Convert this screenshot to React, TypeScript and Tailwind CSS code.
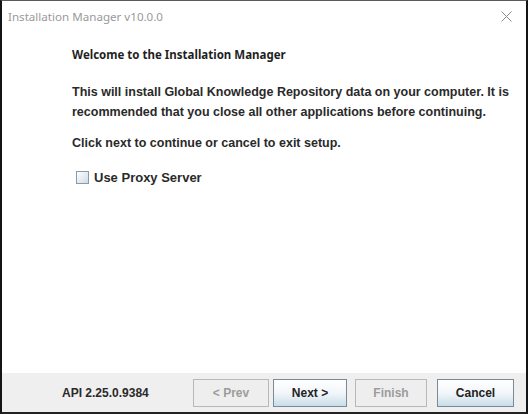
export default function App() {
  const disabledBtn =
    "h-[28px] border border-[#b8b8b8] bg-[#eeeeee] text-[#9c9c9c] text-[12px] font-bold flex items-center justify-center";
  const activeBtn =
    "h-[28px] border border-[#7a8a99] text-[#222] text-[12px] font-bold flex items-center justify-center bg-gradient-to-b from-[#ffffff] via-[#f2f6fa] to-[#c8dde8]";

  return (
    <div className="w-[528px] h-[414px] bg-white overflow-hidden">
      <div className="w-full h-full flex flex-col border-x-2 border-b-2 border-t border-x-[#141414] border-b-[#222] border-t-[#5a5a5a]">
        <div className="h-[31px] flex items-center justify-between pl-[6px] pr-[14px] shrink-0">
          <span className="text-[11.6px] text-[#9a9a9a]" style={{ fontFamily: "'Noto Sans', sans-serif" }}>
            Installation Manager v10.0.0
          </span>
          <svg width="11" height="11" viewBox="0 0 11 11" className="text-[#8a8a8a]">
            <path d="M0.5 0.5L10.5 10.5M10.5 0.5L0.5 10.5" stroke="currentColor" strokeWidth="1" fill="none" />
          </svg>
        </div>

        <div className="flex-1 pl-[70px] pr-[10px] pt-[15px]" style={{ fontFamily: "'Liberation Sans', Arial, sans-serif" }}>
          <h1
            className="text-[11.5px] font-bold text-[#1f1f1f] leading-[16px]"
            style={{ fontFamily: "'Noto Sans', Tahoma, sans-serif" }}
          >
            Welcome to the Installation Manager
          </h1>
          <p className="mt-[19px] text-[12.5px] font-bold text-[#2a2a2a] leading-[20px]">
            This will install Global Knowledge Repository data on your computer. It is
            <br />
            recommended that you close all other applications before continuing.
          </p>
          <p className="mt-[11px] text-[12.5px] font-bold text-[#2a2a2a] leading-[20px]">
            Click next to continue or cancel to exit setup.
          </p>
          <label className="mt-[15px] ml-[4px] flex items-center gap-[5px] text-[13px] font-bold text-[#2a2a2a]">
            <span className="w-[13px] h-[13px] border border-[#8a9aa8] bg-gradient-to-br from-[#ffffff] to-[#cfdbe6] shrink-0" />
            Use Proxy Server
          </label>
        </div>

        <div
          className="h-[39px] bg-[#efefef] flex items-center shrink-0"
          style={{ fontFamily: "'Liberation Sans', Arial, sans-serif" }}
        >
          <span className="ml-[60px] w-[131px] text-[12px] font-bold text-[#2a2a2a]">API 2.25.0.9384</span>
          <div className={`${disabledBtn} w-[76px]`}>&lt; Prev</div>
          <div className={`${activeBtn} w-[74px] ml-[4px]`}>Next &gt;</div>
          <div className={`${disabledBtn} w-[72px] ml-[8px]`}>Finish</div>
          <div className={`${activeBtn} w-[77px] ml-[10px]`}>Cancel</div>
        </div>
      </div>
    </div>
  );
}
